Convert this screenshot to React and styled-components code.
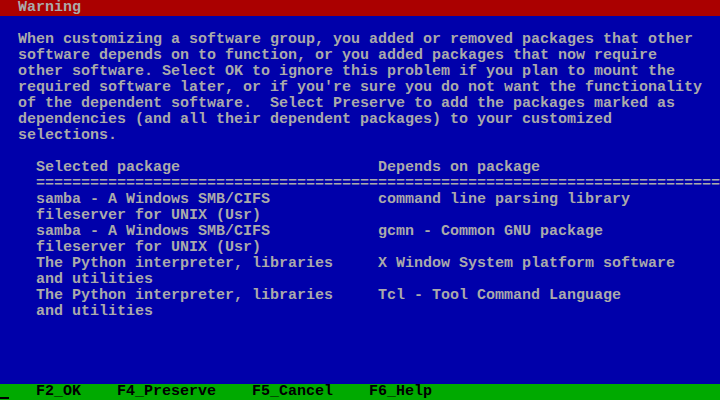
import React from "react";
import styled, { createGlobalStyle } from "styled-components";

const Global = createGlobalStyle`
  html, body { margin: 0; padding: 0; background: #0000aa; }
  body { font-family: "Liberation Mono", "DejaVu Sans Mono", monospace; }
`;

const Screen = styled.div`
  position: relative;
  width: 720px;
  height: 400px;
  overflow: hidden;
  background: #0000aa;
  color: #aaaaaa;
  font-family: "Liberation Mono", "DejaVu Sans Mono", monospace;
  font-size: 15px;
  font-weight: bold;
  line-height: 16px;
  display: grid;
  grid-template-rows: 16px 1fr 16px;
  white-space: pre;
`;

const TitleBar = styled.div`
  background: #aa0000;
  color: #aaaaaa;
  padding-left: 2ch;
`;

const Body = styled.div`
  display: flex;
  flex-direction: column;
  padding-top: 16px;
`;

const Paragraph = styled.div`
  padding-left: 2ch;
`;

const Line = styled.div`
  height: 16px;
`;

const Table = styled.div`
  margin-top: 16px;
  padding-left: 4ch;
  display: grid;
  grid-template-columns: 38ch 1fr;
`;

const Cell = styled.div`
  grid-column: ${(p) => (p.$wide ? "1 / -1" : "auto")};
`;

const Footer = styled.div`
  background: #00aa00;
  color: #000000;
  padding-left: 4ch;
  display: flex;
  gap: 4ch;
`;

const Cursor = styled.div`
  position: absolute;
  left: 0;
  bottom: 1px;
  width: 9px;
  height: 2px;
  background: #000000;
`;

const paragraph = [
  "When customizing a software group, you added or removed packages that other",
  "software depends on to function, or you added packages that now require",
  "other software. Select OK to ignore this problem if you plan to mount the",
  "required software later, or if you're sure you do not want the functionality",
  "of the dependent software.  Select Preserve to add the packages marked as",
  "dependencies (and all their dependent packages) to your customized",
  "selections.",
];

const rows = [
  [["samba - A Windows SMB/CIFS", "fileserver for UNIX (Usr)"], "command line parsing library"],
  [["samba - A Windows SMB/CIFS", "fileserver for UNIX (Usr)"], "gcmn - Common GNU package"],
  [["The Python interpreter, libraries", "and utilities"], "X Window System platform software"],
  [["The Python interpreter, libraries", "and utilities"], "Tcl - Tool Command Language"],
];

const keys = ["F2_OK", "F4_Preserve", "F5_Cancel", "F6_Help"];

export default function App() {
  return (
    <>
      <Global />
      <Screen>
        <TitleBar>Warning</TitleBar>
        <Body>
          <Paragraph>
            {paragraph.map((l, i) => (
              <Line key={i}>{l}</Line>
            ))}
          </Paragraph>
          <Table>
            <Cell>Selected package</Cell>
            <Cell>Depends on package</Cell>
            <Cell $wide>{"=".repeat(76)}</Cell>
            {rows.map(([left, right], i) => (
              <React.Fragment key={i}>
                <Cell>
                  {left.map((l, j) => (
                    <Line key={j}>{l}</Line>
                  ))}
                </Cell>
                <Cell>{right}</Cell>
              </React.Fragment>
            ))}
          </Table>
        </Body>
        <Footer>
          {keys.map((k) => (
            <span key={k}>{k}</span>
          ))}
        </Footer>
        <Cursor />
      </Screen>
    </>
  );
}
